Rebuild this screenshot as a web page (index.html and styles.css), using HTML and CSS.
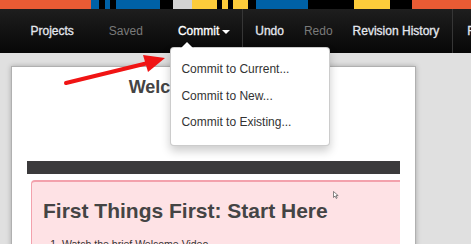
FILE: index.html
```html
<!DOCTYPE html>
<html lang="en">
<head>
    <meta charset="UTF-8">
    <title>Welcome</title>
    <link rel="stylesheet" href="styles.css">
</head>
<body>
    <div class="stripe"></div>

    <nav class="navbar">
        <ul class="nav-group">
            <li><a class="nav-link" href="#">Projects</a></li>
            <li><a class="nav-link muted" href="#">Saved</a></li>
            <li class="dropdown">
                <a class="nav-link active commit" href="#">Commit<span class="caret"></span></a>
                <ul class="dropdown-menu">
                    <li><a href="#">Commit to Current...</a></li>
                    <li><a href="#">Commit to New...</a></li>
                    <li><a href="#">Commit to Existing...</a></li>
                </ul>
            </li>
        </ul>
        <ul class="nav-group divided">
            <li><a class="nav-link slim" href="#">Undo</a></li>
            <li><a class="nav-link slim muted" href="#">Redo</a></li>
            <li><a class="nav-link slim" href="#">Revision History</a></li>
        </ul>
        <ul class="nav-group divided last">
            <li><a class="nav-link slim" href="#">Feedback</a></li>
        </ul>
    </nav>

    <main class="workspace">
        <div class="panel">
            <h1>Welcome to the Lab</h1>
            <p class="subtitle">Get started here</p>
            <div class="panel-bar"></div>
            <div class="notice">
                <h2>First Things First: Start Here</h2>
                <ol>
                    <li>Watch the brief Welcome Video</li>
                </ol>
                <svg class="pointer" width="6" height="8" viewBox="0 0 6 8">
                    <path d="M0.5 0.5 L0.5 6.5 L2 5 L3.3 7.5 L4.2 7 L3 4.6 L5.2 4.6 Z" fill="#fff" stroke="#555" stroke-width="0.7"/>
                </svg>
            </div>
        </div>
    </main>

    <!-- annotation arrow drawn over the page -->
    <svg class="annotation" width="471" height="244" viewBox="0 0 471 244">
        <line x1="66" y1="83" x2="148" y2="63" stroke="#f01414" stroke-width="4" stroke-linecap="round"/>
        <polygon points="165,58 148,72 143,55" fill="#f01414"/>
    </svg>
</body>
</html>
```

FILE: styles.css
```css
* {
    box-sizing: border-box;
}
html, body {
    margin: 0;
    padding: 0;
    height: 100%;
    overflow: hidden;
}
body {
    font-family: "Liberation Sans", Arial, sans-serif;
    background: #e0e0e0;
    position: relative;
}
ul, ol {
    margin: 0;
    padding: 0;
    list-style: none;
}
a {
    text-decoration: none;
}

.stripe {
    height: 9px;
    background: linear-gradient(to right,
        #e95b34 0 91px,
        #0061a6 91px 99px,
        #000 99px 105px,
        #0061a6 105px 110px,
        #000 110px 116px,
        #0061a6 116px 160px,
        #000 160px 173px,
        #d3d3d3 173px 192px,
        #fdcc3b 192px 217px,
        #000 217px 222px,
        #fdcc3b 222px 228px,
        #000 228px 233px,
        #fdcc3b 233px 248px,
        #000 248px 256px,
        #0061a6 256px 308px,
        #000 308px 354px,
        #fdcc3b 354px 390px,
        #000 390px 412px,
        #e95b34 412px 471px);
}

.navbar {
    display: flex;
    height: 44px;
    padding-left: 13px;
    background: linear-gradient(#1e1e1e, #070707);
    white-space: nowrap;
    position: relative;
    z-index: 2;
}
.nav-group {
    display: flex;
    flex-shrink: 0;
}
.nav-group.divided {
    border-left: 1px solid #363636;
    padding: 0 3px 0 2px;
}
.nav-group.last {
    padding-left: 4px;
}
.nav-link {
    display: block;
    padding: 0 17.5px;
    line-height: 44px;
    font-size: 12px;
    color: #e4e7ee;
    -webkit-text-stroke: 0.3px currentColor;
}
.nav-link.slim {
    padding: 0 10px;
}
.nav-link.muted {
    color: #7a7a7a;
    -webkit-text-stroke: 0;
}
.nav-link.active {
    color: #fff;
}
.nav-link.commit {
    padding-right: 12px;
}
.caret {
    display: inline-block;
    width: 0;
    height: 0;
    margin-left: 3px;
    vertical-align: middle;
    border-top: 4px solid #fff;
    border-left: 4px solid transparent;
    border-right: 4px solid transparent;
}

.dropdown {
    position: relative;
}
.dropdown-menu {
    position: absolute;
    top: 38px;
    left: 10px;
    width: 160px;
    padding: 8px 0 9px;
    background: #fff;
    border: 1px solid rgba(0, 0, 0, 0.2);
    border-radius: 4px;
    box-shadow: 0 5px 10px rgba(0, 0, 0, 0.2);
}
.dropdown-menu::before {
    content: "";
    position: absolute;
    top: -7px;
    left: 9px;
    border-left: 7px solid transparent;
    border-right: 7px solid transparent;
    border-bottom: 7px solid rgba(0, 0, 0, 0.2);
}
.dropdown-menu::after {
    content: "";
    position: absolute;
    top: -6px;
    left: 10px;
    border-left: 6px solid transparent;
    border-right: 6px solid transparent;
    border-bottom: 6px solid #fff;
}
.dropdown-menu a {
    display: block;
    padding: 0 10px;
    line-height: 26.5px;
    font-size: 12px;
    color: #333;
}

.workspace {
    padding: 13px 55px 0 11px;
}
.panel {
    background: #fff;
    border: 1px solid #b0b0b0;
    box-shadow: 0 0 5px rgba(0, 0, 0, 0.25);
    padding: 0 15px 40px;
}
.panel h1 {
    margin: 9px 0 0;
    font-size: 18px;
    line-height: 22px;
    text-align: center;
    color: #444;
}
.subtitle {
    margin: 8px 0 0;
    font-size: 12px;
    line-height: 14px;
    text-align: center;
    color: #334;
}
.panel-bar {
    margin-top: 41px;
    height: 13px;
    background: #3b3a3c;
}
.notice {
    position: relative;
    margin: 6px 0 0 4px;
    padding: 17px 0 20px 11px;
    background: #fee2e5;
    border-top: 2px solid #f3a1ac;
    border-left: 1px solid #f3a1ac;
    border-radius: 4px 0 0 0;
}
.notice h2 {
    margin: 0;
    font-size: 21px;
    line-height: 24px;
    color: #444;
}
.notice ol {
    margin-top: 14px;
    padding-left: 19px;
    list-style: decimal;
    font-size: 10.5px;
    line-height: 14px;
    color: #333;
}
.pointer {
    position: absolute;
    top: 9px;
    left: 301px;
}

.annotation {
    position: absolute;
    top: 0;
    left: 0;
    z-index: 3;
    pointer-events: none;
}
```
